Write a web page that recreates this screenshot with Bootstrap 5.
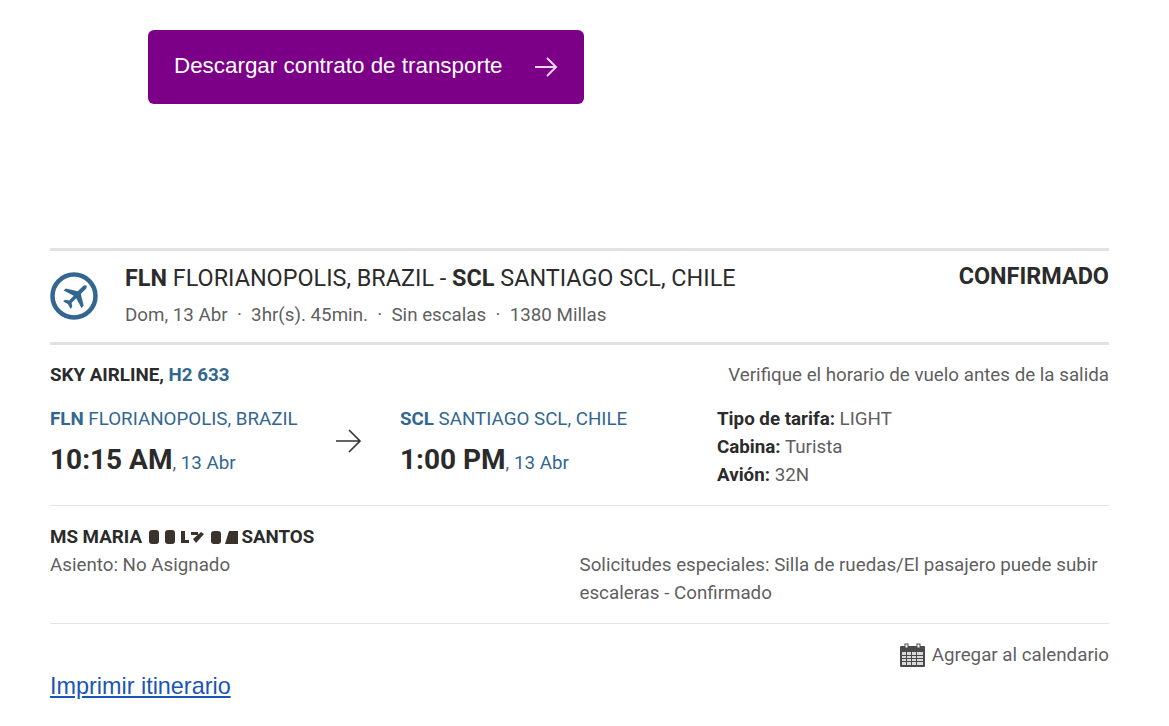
<!DOCTYPE html>
<html lang="es">
<head>
  <meta charset="UTF-8">
  <meta name="viewport" content="width=device-width, initial-scale=1.0">
  <title>Itinerario</title>
  <link href="https://cdn.jsdelivr.net/npm/bootstrap@5.3.0/dist/css/bootstrap.min.css" rel="stylesheet">
  <style>
    body { font-family: Roboto, "Liberation Sans", sans-serif; font-size: 18.75px; line-height: 28px; color: #5f5f5f; }
    .page-wrap { padding: 30px 60px 0 50px; }
    .btn-contract { margin-left: 98px; width: 436px; height: 74px; background: #7b0087; color: #fff; border: 0; border-radius: 6px; padding: 0 26px; font-family: "Liberation Sans", Arial, sans-serif; font-size: 22.4px; }
    .btn-contract:hover { background: #7b0087; color: #fff; }
    .btn-label { margin-bottom: 3px; }
    .trip-box { margin-top: 144px; border-top: 3px solid #e2e2e2; }
    .trip-head { height: 94px; padding-top: 13px; border-bottom: 3px solid #e2e2e2; }
    .trip-icon { margin: 8px 27px 0 0; flex-shrink: 0; }
    .trip-title { font-size: 23.4px; line-height: 28px; color: #2b2b2b; }
    .trip-sub { margin-top: 9px; }
    .trip-status { font-size: 23.4px; line-height: 24px; font-weight: 700; color: #2b2b2b; }
    .strong-dark { font-weight: 700; color: #2b2b2b; }
    .blue-text { color: #336791; }
    .big-time { font-size: 28px; font-weight: 700; color: #2b2b2b; line-height: 36px; }
    .time-line { margin-top: 9px; }
    .carrier-row { padding-top: 16px; }
    .flight-row { padding-top: 16px; padding-bottom: 16px; }
    .pax-block { padding-top: 17px; padding-bottom: 16px; }
    .cal-row { margin-top: 17px; }
    .col-from { width: 280px; }
    .col-arrow { width: 70px; padding-top: 22px; }
    .col-to { width: 317px; }
    .sep-line { border-bottom: 1px solid #e4e4e4; }
    .smudge { vertical-align: -2px; margin: 0 -2px 0 2px; filter: blur(.5px); }
    .cal-icon { margin-right: 7px; }
    .print-link { display: inline-block; margin-top: 3px; font-family: "Liberation Sans", Arial, sans-serif; font-size: 23.4px; color: #1a56b5; }
  </style>
</head>
<body>
  <div class="page-wrap">
    <a href="#" class="btn btn-contract d-flex align-items-center justify-content-between">
      <span class="btn-label">Descargar contrato de transporte</span>
      <svg width="24" height="24" viewBox="0 0 24 24" fill="none" stroke="#f1d5f3" stroke-width="2"><path d="M1 12h21M13 3l9 9-9 9"/></svg>
    </a>

    <div class="trip-box">
      <div class="trip-head d-flex justify-content-between">
        <div class="d-flex">
          <svg class="trip-icon" width="48" height="48" viewBox="0 0 48 48">
            <circle cx="24" cy="24" r="21.5" fill="none" stroke="#336791" stroke-width="4.5"/>
            <path fill="#336791" transform="translate(0 1.5)" d="M36 11.500c1.200 1.100.9 3-.4 4.300l-4.800 4.800 2.900 11.700-2.200 2.200-5.300-9.800-4.600 4.500.6 4.300-1.700 1.700-2.600-4.600-4.700-2.600 1.700-1.700 4.300.6 4.500-4.600-10.100-5.200 2.200-2.200 12 2.800 4.800-4.800c1.300-1.300 3.100-1.600 4.200-.5z"/>
          </svg>
          <div>
            <div class="trip-title"><b>FLN</b> FLORIANOPOLIS, BRAZIL - <b>SCL</b> SANTIAGO SCL, CHILE</div>
            <div class="trip-sub">Dom, 13 Abr &nbsp;·&nbsp; 3hr(s). 45min. &nbsp;·&nbsp; Sin escalas &nbsp;·&nbsp; 1380 Millas</div>
          </div>
        </div>
        <div class="trip-status">CONFIRMADO</div>
      </div>

      <div class="carrier-row d-flex justify-content-between">
        <div><span class="strong-dark">SKY AIRLINE,</span> <b class="blue-text">H2 633</b></div>
        <div>Verifique el horario de vuelo antes de la salida</div>
      </div>

      <div class="flight-row d-flex sep-line">
        <div class="col-from">
          <div class="blue-text"><b>FLN</b> FLORIANOPOLIS, BRAZIL</div>
          <div class="time-line"><span class="big-time">10:15 AM</span>, <span class="blue-text">13 Abr</span></div>
        </div>
        <div class="col-arrow d-flex align-items-start">
          <svg class="ms-1" width="28" height="28" viewBox="0 0 28 28" fill="none" stroke="#333" stroke-width="1.6"><path d="M2 14h24M15 3l11 11-11 11"/></svg>
        </div>
        <div class="col-to">
          <div class="blue-text"><b>SCL</b> SANTIAGO SCL, CHILE</div>
          <div class="time-line"><span class="big-time">1:00 PM</span>, <span class="blue-text">13 Abr</span></div>
        </div>
        <div>
          <div><span class="strong-dark">Tipo de tarifa:</span> LIGHT</div>
          <div><span class="strong-dark">Cabina:</span> Turista</div>
          <div><span class="strong-dark">Avión:</span> 32N</div>
        </div>
      </div>

      <div class="pax-block sep-line">
        <div class="strong-dark">MS MARIA
          <svg class="smudge" width="90" height="15" viewBox="0 0 90 15" fill="#3a332c"><rect x="0" y="0" width="10" height="14" rx="3"/><rect x="16" y="0" width="10" height="14" rx="3"/><path d="M32 1h4v9h4v3h-8zM42 2h7v3h-7zM44 9l8-7 3 2-8 9z"/><rect x="62" y="1" width="10" height="13" rx="3"/><path d="M76 14l4-13h9v13z"/></svg>
          SANTOS</div>
        <div class="row g-0">
          <div class="col-6">Asiento: No Asignado</div>
          <div class="col-6">Solicitudes especiales: Silla de ruedas/El pasajero puede subir escaleras - Confirmado</div>
        </div>
      </div>

      <div class="cal-row d-flex justify-content-end align-items-center">
        <svg class="cal-icon" width="25" height="24" viewBox="0 0 25 24">
          <rect x="0" y="3" width="25" height="21" rx="1" fill="#4a4a4a"/>
          <rect x="2" y="9" width="21" height="13" fill="#d8d8d8"/>
          <path stroke="#4a4a4a" d="M2 12.5h21M2 15.5h21M2 18.5h21M6.5 9v13M11.5 9v13M16.5 9v13"/>
          <rect x="5" y="1" width="3" height="4" fill="#fff" stroke="#4a4a4a"/>
          <rect x="17" y="1" width="3" height="4" fill="#fff" stroke="#4a4a4a"/>
        </svg>
        <span>Agregar al calendario</span>
      </div>
      <a href="#" class="print-link">Imprimir itinerario</a>
    </div>
  </div>
  <script src="https://cdn.jsdelivr.net/npm/bootstrap@5.3.0/dist/js/bootstrap.bundle.min.js"></script>
</body>
</html>
